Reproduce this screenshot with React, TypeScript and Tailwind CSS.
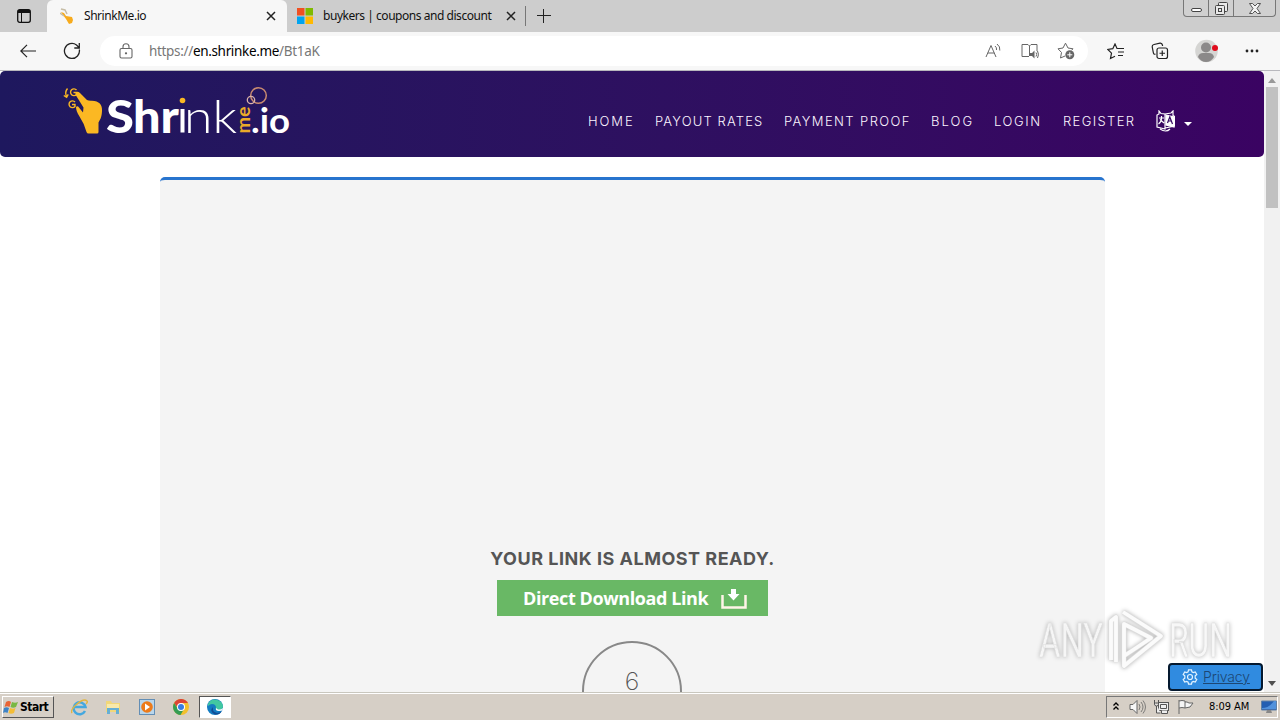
import React from 'react';

interface NavItem {
  label: string;
  className: string;
}

const navItems: NavItem[] = [
  { label: 'HOME', className: 'w-[47px] tracking-[1.9px]' },
  { label: 'PAYOUT RATES', className: 'w-[109px] tracking-[1.15px]' },
  { label: 'PAYMENT PROOF', className: 'w-[127px] tracking-[1.4px]' },
  { label: 'BLOG', className: 'w-[43px] tracking-[2.1px]' },
  { label: 'LOGIN', className: 'w-[49px] tracking-[1.6px]' },
  { label: 'REGISTER', className: 'w-[73px] tracking-[1.35px]' },
];

const CloseIcon = () => (
  <svg width="10" height="10" viewBox="0 0 10 10" stroke="#222" strokeWidth="1.5">
    <path d="M1 1l8 8M9 1l-8 8" />
  </svg>
);

const TabStrip = () => (
  <div className="flex h-8 shrink-0 bg-[#cdcdcd]">
    <div className="flex w-[47px] items-center rounded-br-md pl-[17px]">
      <svg width="14" height="14" viewBox="0 0 14 14" fill="none" stroke="#111">
        <rect x="0.7" y="0.7" width="12.6" height="12.6" rx="2" strokeWidth="1.3" />
        <path d="M1 2.5h12" strokeWidth="3" />
        <path d="M4.5 3v10" strokeWidth="1" />
      </svg>
    </div>
    <div className="flex w-60 items-center rounded-t-md bg-[#f7f7f7] pl-[13px]">
      <svg width="15" height="17" viewBox="0 0 15 17">
        <path d="M1 4l3 1 2 3 6 1 1 3-1 3-3 1-3-5-3-4z" fill="#f7ab1d" />
        <path d="M1 1l4 1 2 4M0 5l4 3" stroke="#c6bda6" strokeWidth="1.5" fill="none" />
      </svg>
      <span className="ml-[9px] w-[172px] text-[12px] tracking-[-0.45px] text-[#111]">ShrinkMe.io</span>
      <span className="ml-[10px]"><CloseIcon /></span>
    </div>
    <div className="flex w-[239px] items-center pl-[10px]">
      <svg width="16" height="16" viewBox="0 0 16 16">
        <path d="M0 0h7.5v7.5H0z" fill="#f05022" />
        <path d="M8.5 0H16v7.5H8.5z" fill="#7fba00" />
        <path d="M0 8.5h7.5V16H0z" fill="#00a4ef" />
        <path d="M8.5 8.5H16V16H8.5z" fill="#ffb900" />
      </svg>
      <span className="ml-[10px] w-[173px] text-[12px] tracking-[-0.46px] whitespace-nowrap text-[#111]">
        buykers | coupons and discount
      </span>
      <span className="ml-[10px]"><CloseIcon /></span>
      <span className="ml-auto h-5 w-px bg-[#777]" />
    </div>
    <div className="flex items-center pl-[11px]">
      <svg width="14" height="14" viewBox="0 0 14 14" stroke="#222">
        <path d="M6.5 0v14M0 6.5h14" />
      </svg>
    </div>
    {/* window buttons */}
    <div className="mr-1 ml-auto flex h-[17px] w-[93px] rounded-b border border-t-0 border-[#777] bg-[#d0d0d0]">
      <div className="flex w-[25px] items-end justify-center border-r border-[#777] pb-1">
        <span className="h-1 w-[11px] rounded-xs border border-[#444] bg-white" />
      </div>
      <div className="flex w-[25px] items-center justify-center border-r border-[#777]">
        <svg width="13" height="13" viewBox="0 0 13 13" fill="#e9e9e9" stroke="#444">
          <rect x="3.5" y="0.5" width="9" height="9" rx="1" />
          <rect x="0.5" y="3.5" width="9" height="9" rx="1" />
          <rect x="3.5" y="6.5" width="3" height="3" />
        </svg>
      </div>
      <div className="flex flex-1 items-center justify-center">
        <svg width="12" height="11" viewBox="0 0 12 11" fill="#f3f3f3" stroke="#444" strokeWidth="0.9">
          <path d="M.5.5h3L6 3 8.5.5h3L8 5.5l3.5 5h-3L6 8l-2.5 2.5h-3L4 5.500z" />
        </svg>
      </div>
    </div>
  </div>
);

const Toolbar = () => (
  <div className="flex h-[39px] shrink-0 items-center border-b border-[#b8b8bd] bg-[#f7f7f7]">
    <svg width="16" height="14" viewBox="0 0 16 14" fill="none" stroke="#222" strokeWidth="1.2" className="ml-5">
      <path d="M16 7H1M7 .8L.8 7 7 13.2" />
    </svg>
    <svg width="18" height="18" viewBox="0 0 18 18" fill="none" stroke="#222" strokeWidth="1.3" className="ml-[27px]">
      <path d="M16.3 7.5A7.5 7.5 0 1 1 13.5 3l2.5 2.5M16.3 1v5h-5" />
    </svg>
    <div className="ml-[19px] flex h-[30px] w-[988px] items-center rounded-full bg-white pl-[19px]">
      <svg width="14" height="16" viewBox="0 0 14 16" fill="none" stroke="#666" strokeWidth="1.1">
        <rect x="1" y="5.5" width="12" height="9.5" rx="1.5" />
        <path d="M4 5.5V3.700a3 3 0 0 1 6 0v1.800" />
        <circle cx="7" cy="10.3" r="0.6" fill="#666" />
      </svg>
      <span className="ml-4 w-[180px] text-[13.5px] tracking-[-0.33px] whitespace-nowrap text-[#777]">
        https://<span className="text-black">en.shrinke.me</span>/Bt1aK
      </span>
      <div className="mr-[13px] ml-auto flex items-center">
        <svg width="17" height="16" viewBox="0 0 17 16" fill="none" stroke="#666">
          <path d="M1 14L6 2.5 11 14M2.8 10h6.5M10 3q2 1.500 1.500 4M12 1q3.500 2.500 2.800 6.500" />
        </svg>
        <svg width="18" height="16" viewBox="0 0 18 16" fill="none" stroke="#666" className="ml-[19px]">
          <path d="M8 13.5H1v-12h6l1.500 1.500L10 1.500h6V8M8.500 3v10" />
          <path d="M9 10h2l2.5-2.500v8L11 13H9z" fill="#666" stroke="none" />
          <path d="M15 9.500q1.500 2 0 4M16.500 8q2 3.500 0 7" />
        </svg>
        <svg width="18" height="18" viewBox="0 0 18 18" fill="none" stroke="#666" className="ml-[18px]">
          <path d="M8 14l-4.500 2 1-5.500L1 6.800l5-.8 2.500-4.800L11 6l5 .8-1.500 1.500" />
          <circle cx="12.8" cy="12.8" r="4.5" fill="#666" stroke="none" />
          <path d="M12.800 10.300v5M10.300 12.800h5" stroke="white" />
        </svg>
      </div>
    </div>
    <svg width="18" height="17" viewBox="0 0 18 17" fill="none" stroke="#222" strokeWidth="1.2" className="ml-[19px]">
      <path d="M8 13.200L3.500 15.500l1-5.300L.800 6.500l5-.8L8 1l2 4.500h7M11 9h6M11 12.500h5" />
    </svg>
    <svg width="18" height="18" viewBox="0 0 18 18" fill="none" stroke="#222" strokeWidth="1.2" className="ml-[26px]">
      <path d="M4.500 12.200Q2.500 12.500 2.300 10.500L1.200 4.800Q1 3 3 2.500L9 1.200q2-.3 2.500 2V4" />
      <rect x="6" y="6" width="10.5" height="10.5" rx="2" />
      <path d="M11.250 8.500v5.500M8.500 11.250H14" />
    </svg>
    <svg width="24" height="24" viewBox="0 0 24 24" className="ml-[26px]">
      <circle cx="11.5" cy="12" r="11.3" fill="#d5d5d3" />
      <circle cx="11" cy="8.5" r="5" fill="#8b8989" />
      <path d="M3 18q1-4 5-4h6q4 0 5 4-3 5-8 5t-8-5" fill="#8b8989" />
      <circle cx="20" cy="9" r="3" fill="#e00b1c" />
    </svg>
    <svg width="14" height="4" viewBox="0 0 14 4" fill="#222" className="ml-[26px]">
      <circle cx="2" cy="2" r="1.4" />
      <circle cx="7" cy="2" r="1.4" />
      <circle cx="12" cy="2" r="1.4" />
    </svg>
  </div>
);

const Logo = () => (
  <svg width="230" height="56" viewBox="62 84 230 56" fontFamily="Lato, sans-serif" className="overflow-visible">
    <g fill="none" stroke="#fbb823" strokeWidth="1.4">
      <path d="M67.500 88.500q-3 3.500-1 8M63.800 95.500l2.800 1.800 1.600-3" />
      <path d="M76.500 90a3.400 3.400 0 1 0 0 4.500v-2h-3M75 102a3.400 3.400 0 1 0 0 4.500v-2h-3" />
    </g>
    <path
      d="M76 92.500q1.500-1.500 4 .5l7 7q1.500 1 5 .8c7 .2 10.500 4 10 10.200-.2 6-1.500 8-3.500 11.500v9.500q0 1.500-1.500 1.500h-8.500q-1.500 0-2-1.500-2-8-7-15.500c-2.500-4-3.500-7-3.500-9.500q1.500-1.500 3 .5l4 5 .5-5-7.500-12q-1-2 0-3z"
      fill="#fbb823"
    />
    <g fill="white">
      <text x="106" y="132.5" fontSize="46" fontWeight="900" textLength="28" lengthAdjust="spacingAndGlyphs">S</text>
      <text x="133" y="132.5" fontSize="46" fontWeight="900" textLength="46" lengthAdjust="spacingAndGlyphs">hr</text>
      <text x="184" y="132.5" fontSize="46" fontWeight="300" textLength="53" lengthAdjust="spacingAndGlyphs">nk</text>
      <rect x="180.5" y="109" width="4" height="23.5" />
      <text x="251" y="132.5" fontSize="34" fontWeight="700" textLength="39" lengthAdjust="spacingAndGlyphs">.io</text>
    </g>
    <circle cx="182.5" cy="100.5" r="2.8" fill="#fbb823" />
    <text
      transform="translate(250 133.500) rotate(-90)"
      fill="#eaaa29"
      fontSize="18"
      fontWeight="700"
      textLength="27"
      lengthAdjust="spacingAndGlyphs"
    >
      me
    </text>
    <circle cx="258.5" cy="95.5" r="7.8" fill="none" stroke="#c98b70" strokeWidth="1.5" />
    <circle cx="251" cy="100" r="3.7" fill="none" stroke="#d9b2a8" strokeWidth="1.3" />
  </svg>
);

const SiteHeader = () => (
  <header className="flex h-[86px] rounded-[5px] bg-linear-to-r from-[#1e185e] to-[#3a0362] pt-[13px] pr-[72px] pl-[62px]">
    <Logo />
    <nav className="ml-auto flex h-[74px] items-center gap-5">
      {navItems.map((item) => (
        <a
          key={item.label}
          href="#"
          className={`${item.className} font-[Inter,sans-serif] text-[13px] leading-5 font-light whitespace-nowrap text-[#fcf5ff]`}
        >
          {item.label}
        </a>
      ))}
      <div className="flex w-9 items-center justify-between">
        <svg width="19" height="22" viewBox="0 0 19 22" fill="none" stroke="white" strokeWidth="1.2">
          <path d="M3 1v3L1 5v12l8 2V4L5 3.500zM9 4l6-1 2-2v4.500l1.500 1V16L9 18zM4 19q6 4 10 0M3 8h5M5.500 6v2q0 4-3 6M4 9.500L8 13" />
          <path d="M10 5l8 2v10l-8-2z" fill="white" />
          <path d="M11.500 13l2.300-6 2.700 7M12.300 11h3.500" stroke="#340761" />
        </svg>
        <svg width="8" height="4" viewBox="0 0 8 4" fill="white" className="mt-[5px]">
          <path d="M0 0h8L4 4z" />
        </svg>
      </div>
    </nav>
  </header>
);

const WatermarkIcon = () => (
  <svg width="200" height="66" viewBox="0 0 200 66" fontFamily="Roboto, sans-serif" className="overflow-visible drop-shadow-[0_0_2px_rgba(0,0,0,0.3)]">
    <g fill="#ffffff" fillOpacity="0.8" stroke="#dddddd" strokeWidth="0.6" fontSize="49">
      <text x="3" y="50" textLength="64" lengthAdjust="spacingAndGlyphs">ANY</text>
      <text x="133" y="50" textLength="63" lengthAdjust="spacingAndGlyphs">RUN</text>
    </g>
    <g fill="none" strokeLinejoin="round">
      <path d="M87 5l38 24-37 30V17l27 14-27 18M75 53V14l5-4v45" stroke="#dddddd" strokeWidth="5" />
      <path d="M87 5l38 24-37 30V17l27 14-27 18M75 53V14l5-4v45" stroke="#fbfbfb" strokeWidth="3.8" />
    </g>
  </svg>
);

const Page = () => (
  <main className="relative flex min-h-0 flex-1 bg-white">
    <div className="min-w-0 flex-1 overflow-hidden">
      <SiteHeader />
      <section className="mt-5 ml-40 flex h-[700px] w-[945px] flex-col items-center rounded-[5px] border-t-[3px] border-[#2874ce] bg-[#f4f4f4] pt-[366px]">
        <h1 className="font-[Inter,sans-serif] text-[18px] leading-[26px] font-bold tracking-[0.5px] whitespace-nowrap text-[#555]">
          YOUR LINK IS ALMOST READY.
        </h1>
        <a href="#" className="mt-2 flex h-9 w-[271px] items-center bg-[#69b865] pl-[26px] text-white">
          <span className="w-[185px] font-[Open_Sans,sans-serif] text-[18px] font-bold tracking-[-0.4px] whitespace-nowrap">
            Direct Download Link
          </span>
          <svg width="26" height="20" viewBox="0 0 26 20" className="mt-0.5 ml-[13px]">
            <path d="M1.500 6v12.500h23V6" fill="none" stroke="#fff4e8" strokeWidth="2.5" />
            <path d="M10 0h5v5h3.500l-6 6.500-6-6.500H10z" fill="white" />
          </svg>
        </a>
        <div className="mt-[25px] mr-px flex h-[100px] w-[100px] shrink-0 justify-center rounded-full border-2 border-[#888] pt-[20px] font-[Inter,sans-serif] text-[25px] font-extralight text-[#555]">
          6
        </div>
      </section>
    </div>
    <div className="flex w-4 flex-col items-center bg-[#f1f1f1]">
      <svg width="8" height="5" viewBox="0 0 8 5" fill="#999" className="mt-[7px] shrink-0">
        <path d="M4 0l4 5H0z" />
      </svg>
      <span className="mt-1 h-[121px] w-3 bg-[#c1c1c1]" />
      <svg width="8" height="5" viewBox="0 0 8 5" fill="#505050" className="mt-auto mb-1.5 shrink-0">
        <path d="M0 0h8L4 5z" />
      </svg>
    </div>
    <div className="absolute right-[44px] bottom-[19px]">
      <WatermarkIcon />
    </div>
    <button className="absolute right-[17px] bottom-px flex h-7 w-[95px] items-center rounded-[4px] border-2 border-[#05192f] bg-[#308be0] pl-3 text-[#1d4773]">
      <svg width="16" height="16" viewBox="0 0 16 16" fill="none" stroke="#e5f4ff" strokeWidth="1.2">
        <circle cx="8" cy="8" r="2.5" />
        <path d="M6.500.8h3l.4 2 1.400.8 2-.7 1.500 2.600-1.600 1.300v2.400l1.600 1.300-1.500 2.600-2-.7-1.400.8-.4 2h-3l-.4-2-1.400-.8-2 .7-1.500-2.600 1.600-1.300V6.800L1.200 5.500l1.500-2.600 2 .7 1.400-.8z" />
      </svg>
      <span className="mb-px ml-[5px] font-[Inter,sans-serif] text-[14px] font-light tracking-[-0.15px] underline">Privacy</span>
    </button>
  </main>
);

const Taskbar = () => (
  <footer className="flex h-7 shrink-0 items-center border-t border-[#c9c7be] bg-[#d6cfc6] font-[DejaVu_Sans_Condensed,sans-serif] text-[11px] text-black shadow-[inset_0_1px_white]">
    <button className="mt-px ml-0.5 flex h-[22px] w-[52px] items-center border border-t-white border-r-[#555] border-b-[#555] border-l-white">
      <svg width="17" height="15" viewBox="0 0 17 15" className="shrink-0">
        <path d="M3 2q3-2 5 0L6.500 7Q4 5.500 1.500 7z" fill="#e96435" />
        <path d="M9 2q3 1.500 6 0l-2 5q-3 1.500-5.500 0z" fill="#78b843" />
        <path d="M1 8q2.500-1.500 5 0L4.500 13Q2 11.500 0 13z" fill="#3e83c6" />
        <path d="M7 8q3 1.500 5.500 0l-1.500 5q-3 1.500-5.500 0z" fill="#f4bd36" />
      </svg>
      <span className="text-[12px] font-bold tracking-[-0.5px]">Start</span>
    </button>
    <div className="mt-px ml-[17px] flex items-center">
      <svg width="17" height="17" viewBox="0 0 17 17" fill="none">
        <path d="M14 12a6 6 0 1 1 .5-4H4" stroke="#45a8df" strokeWidth="2.5" />
        <path d="M1 14Q-1 11 6 5t10-3q1 1-1 3" stroke="#e2b540" strokeWidth="1.4" />
      </svg>
      <svg width="16" height="16" viewBox="0 0 16 16" className="ml-[17px]">
        <path d="M1 2h5l1 2h8v9H1z" fill="#f1d779" />
        <path d="M2 5h12v4H2z" fill="#f8e9aa" />
        <path d="M2 15V9h12v6h-3v-4H5v4z" fill="#66afd4" />
      </svg>
      <svg width="16" height="16" viewBox="0 0 16 16" className="ml-[18px]">
        <rect x="0.5" y="0.5" width="15" height="15" fill="#b9d6eb" stroke="#638eb5" />
        <circle cx="8" cy="8" r="5.8" fill="#ed7b1a" />
        <path d="M6 4.500l5 3.500-5 3.500z" fill="white" />
      </svg>
      <svg width="16" height="16" viewBox="0 0 16 16" className="ml-[18px]">
        <circle cx="8" cy="8" r="8" fill="#f2c02d" />
        <path d="M1.100 4A8 8 0 0 1 15 4H8L5 9z" fill="#dc4436" />
        <path d="M1.100 4A8 8 0 0 0 7.500 16l3.500-6H5z" fill="#359c54" />
        <circle cx="8" cy="8" r="4" fill="white" />
        <circle cx="8" cy="8" r="3" fill="#377de3" />
      </svg>
      <div className="ml-[10px] flex h-[22px] w-8 items-center justify-center border border-t-[#555] border-r-white border-b-white border-l-[#555] bg-white">
        <svg width="16" height="16" viewBox="0 0 16 16">
          <circle cx="8" cy="8" r="8" fill="#137cc1" />
          <path d="M1 5A8 8 0 0 1 16 7q0 4-5 4-3 0-2-2 0-4-4-4-2 0-4 2z" fill="#42c8a1" />
          <path d="M6 8q-1 5 4 6 3 0 5-2-3 5-8 3-5-3-1-7" fill="#134c93" />
          <path d="M9 9q-1 3 3 3 3 0 3.500-1L16 9q-2 2-5 1.500z" fill="white" />
        </svg>
      </div>
    </div>
    <div className="mt-px mr-0.5 ml-auto flex h-[22px] w-[172px] items-center border border-t-[#777] border-r-white border-b-white border-l-[#777] pl-1.5">
      <svg width="6" height="9" viewBox="0 0 6 9" fill="none" stroke="black" strokeWidth="1.3" className="mb-0.5">
        <path d="M.5 3.500L3 1l2.500 2.500M.5 7.500L3 5l2.500 2.500" />
      </svg>
      <svg width="17" height="16" viewBox="0 0 17 16" fill="#f7f7f7" stroke="#666" className="ml-[10px]">
        <path d="M1 5.500h3L8 1.500v13l-4-4H1z" />
        <path d="M10 5q2 3 0 6M12 3q4 5 0 10M14 1.500q5 6.500 0 13" fill="none" strokeWidth="0.8" />
      </svg>
      <svg width="17" height="16" viewBox="0 0 17 16" fill="#eeeeee" stroke="#555" className="ml-[7px]">
        <rect x="5.5" y="3.5" width="10" height="8" />
        <path d="M7.500 5.500h6v4h-6zM8.500 11.500v3h6v-3" />
        <path d="M1.500 1v4q0 2 2 2v7h4M5.500 1v4q0 2-2 2M1.500 4h4" />
      </svg>
      <svg width="17" height="16" viewBox="0 0 17 16" fill="#f5f5f5" stroke="#666" className="ml-[7px]">
        <path d="M2 1v14M2 2q3-1 6 0v7q-3-1-6 0M8 3h2l2 1h4l-3 4-5 1" />
      </svg>
      <span className="ml-[15px] w-[43px] text-[11px] tracking-[-0.05px] whitespace-nowrap">8:09 AM</span>
      <svg width="16" height="14" viewBox="0 0 16 14" className="ml-[9px]">
        <path d="M.5 1h15v9H.5z" fill="#245fb2" stroke="#6281a4" />
        <path d="M1 8Q8 8 13 1h2v8H1z" fill="#5292dc" />
        <path d="M6 10h4l1 3H5z" fill="#888" />
      </svg>
    </div>
  </footer>
);

const App: React.FC = () => {
  return (
    <div className="flex h-[720px] w-[1280px] flex-col overflow-hidden font-[Noto_Sans,sans-serif]">
      <TabStrip />
      <Toolbar />
      <Page />
      <Taskbar />
    </div>
  );
};

export default App;
